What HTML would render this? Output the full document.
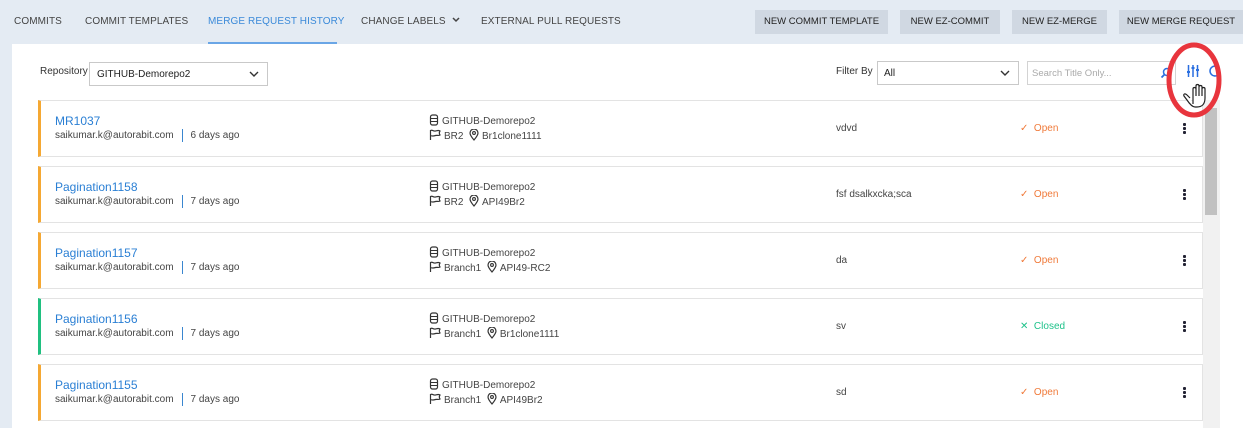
<!DOCTYPE html>
<html><head><style>
*{margin:0;padding:0;box-sizing:border-box}
body{width:1243px;height:428px;overflow:hidden;background:#e4ebf3;font-family:"Liberation Sans",sans-serif;position:relative;color:#333}
.a{position:absolute;white-space:nowrap}
.tab{font-size:10px;color:#444;top:16px;letter-spacing:0.1px}
.btn{position:absolute;top:10px;height:24px;background:#d0d8e2;font-size:9.5px;color:#222;text-align:center;line-height:24px}
.panel{position:absolute;left:12px;top:44px;width:1231px;height:384px;background:#fff}
.row{position:absolute;left:38px;width:1165px;height:57px;border:1px solid #e3e3e3;border-left:3px solid #f5a833;background:#fff}
.t{position:absolute;left:14px;top:13px;font-size:12px;color:#2a7fd4}
.s{position:absolute;left:14px;top:28px;font-size:10px;color:#444}
.s i{display:inline-block;width:1px;height:13px;background:#3a86cf;vertical-align:middle;margin:0 8px}
.r{position:absolute;left:388px;font-size:10px;color:#444}
.r svg{vertical-align:-2px;margin-right:3px}
.d{position:absolute;left:795px;top:22px;font-size:10px;color:#444}
.st{position:absolute;left:979px;top:22px;font-size:10px}
.k{position:absolute;left:1142px;top:22px;width:3px}
.k b{display:block;width:2.5px;height:2.5px;background:#223;border-radius:1px;margin-bottom:1.5px}
</style></head><body>
<svg width="0" height="0" style="position:absolute">
<symbol id="db" viewBox="0 0 10 12"><rect x="1.5" y="1" width="7" height="10" rx="2" fill="none" stroke="#333" stroke-width="1.2"/><path d="M1.5 4.5h7M1.5 7.5h7" stroke="#333" stroke-width="1.1"/></symbol>
<symbol id="fl" viewBox="0 0 12 12"><path d="M1.5 11V1.5c2-1 3 1 5 0.5s3-1 4.5 0c-1 1.5-1 2.5 0 4-1.5 1-3 0-4.5 0.5s-3 1-5 0" fill="none" stroke="#333" stroke-width="1.2"/></symbol>
<symbol id="pn" viewBox="0 0 10 12"><path d="M5 11C2 7.5 1 5.5 1 4a4 4 0 0 1 8 0c0 1.5-1 3.5-4 7z" fill="none" stroke="#333" stroke-width="1.2"/><circle cx="5" cy="4" r="1.4" fill="none" stroke="#333" stroke-width="1.1"/></symbol>
</svg>
<div class="a tab" style="left:14px">COMMITS</div>
<div class="a tab" style="left:85px">COMMIT TEMPLATES</div>
<div class="a tab" style="left:208px;color:#3b8ad9">MERGE REQUEST HISTORY</div>
<div class="a" style="left:208px;top:42px;width:129px;height:2px;background:#6aa6e6"></div>
<div class="a tab" style="left:361px">CHANGE LABELS <svg width="10" height="8" viewBox="0 0 10 8" style="margin-left:2px"><path d="M2 2l3 3 3-3" fill="none" stroke="#444" stroke-width="1.5"/></svg></div>
<div class="a tab" style="left:481px">EXTERNAL PULL REQUESTS</div>
<div class="btn" style="left:755px;width:133px">NEW COMMIT TEMPLATE</div>
<div class="btn" style="left:900px;width:100px">NEW EZ-COMMIT</div>
<div class="btn" style="left:1012px;width:95px">NEW EZ-MERGE</div>
<div class="btn" style="left:1119px;width:124px">NEW MERGE REQUEST</div>
<div class="panel"></div>
<div class="a" style="left:40px;top:66px;font-size:10px;color:#333">Repository</div>
<div class="a" style="left:89px;top:62px;width:179px;height:24px;border:1px solid #c9c9c9;font-size:10px;padding:6px 7px;color:#222">GITHUB-Demorepo2<svg style="position:absolute;right:8px;top:8px" width="10" height="7" viewBox="0 0 10 7"><path d="M1 1l4 4 4-4" fill="none" stroke="#333" stroke-width="1.4"/></svg></div>
<div class="a" style="left:836px;top:66px;font-size:10px;color:#333">Filter By</div>
<div class="a" style="left:877px;top:61px;width:142px;height:24px;border:1px solid #c9c9c9;font-size:10px;padding:6px 6px;color:#222">All<svg style="position:absolute;right:8px;top:8px" width="10" height="7" viewBox="0 0 10 7"><path d="M1 1l4 4 4-4" fill="none" stroke="#333" stroke-width="1.4"/></svg></div>
<div class="a" style="left:1027px;top:61px;width:149px;height:24px;border:1px solid #d3d3d3;font-size:9.5px;padding:6px 4px;color:#aaa">Search Title Only...<svg style="position:absolute;right:3px;top:5px" width="12" height="12" viewBox="0 0 12 12"><circle cx="7" cy="5" r="3.5" fill="none" stroke="#2a6fe0" stroke-width="1.5"/><path d="M4.5 7.5L1.5 10.5" stroke="#2a6fe0" stroke-width="1.8"/></svg></div>
<svg class="a" style="left:1186px;top:64px" width="14" height="14" viewBox="0 0 14 14" stroke="#2a6fe0" stroke-width="1.5"><path d="M2.5 1v12M7 1v12M11.5 1v12"/><path d="M1 8h3M5.5 4h3M10 6h3" stroke-width="2"/></svg>
<svg class="a" style="left:1206px;top:64px" width="14" height="14" viewBox="0 0 14 14"><path d="M12 3A5 5 0 1 0 12 11" fill="none" stroke="#2a6fe0" stroke-width="1.6"/></svg>
<div class="a" style="left:1203px;top:100px;width:17px;height:328px;background:#f1f1f1"></div>
<div class="a" style="left:1205px;top:108px;width:12px;height:107px;background:#c1c1c1"></div>
<svg class="a" style="left:1160px;top:40px;z-index:5" width="70" height="80" viewBox="0 0 70 80"><ellipse cx="34" cy="40" rx="25" ry="35" fill="none" stroke="#e8353d" stroke-width="5"/><path d="M33 64v-15c0-2 3-2 3 0v7-10c0-2 3-2 3 0v10-9c0-2 3-2 3 0v9-7c0-2 3-2 3 0v9c0 6-3 9-8 9h-2c-3 0-6-4-8-7l-3-4c-1-2 1-3 3-1l3 3" fill="#fff" stroke="#222" stroke-width="1.2"/></svg>

<div class="row" style="top:100px"><div class="t">MR1037</div><div class="s">saikumar.k@autorabit.com<i></i>6 days ago</div>
<div class="r" style="top:13px"><svg width="10" height="12"><use href="#db"/></svg>GITHUB-Demorepo2</div><div class="r" style="top:28px"><svg width="12" height="12"><use href="#fl"/></svg>BR2 &nbsp;<svg width="10" height="12"><use href="#pn"/></svg>Br1clone1111</div>
<div class="d">vdvd</div><div class="st" style="color:#f07a3a">✓ &nbsp;Open</div><div class="k"><b></b><b></b><b></b></div></div>

<div class="row" style="top:166px"><div class="t">Pagination1158</div><div class="s">saikumar.k@autorabit.com<i></i>7 days ago</div>
<div class="r" style="top:13px"><svg width="10" height="12"><use href="#db"/></svg>GITHUB-Demorepo2</div><div class="r" style="top:28px"><svg width="12" height="12"><use href="#fl"/></svg>BR2 &nbsp;<svg width="10" height="12"><use href="#pn"/></svg>API49Br2</div>
<div class="d">fsf dsalkxcka;sca</div><div class="st" style="color:#f07a3a">✓ &nbsp;Open</div><div class="k"><b></b><b></b><b></b></div></div>

<div class="row" style="top:232px"><div class="t">Pagination1157</div><div class="s">saikumar.k@autorabit.com<i></i>7 days ago</div>
<div class="r" style="top:13px"><svg width="10" height="12"><use href="#db"/></svg>GITHUB-Demorepo2</div><div class="r" style="top:28px"><svg width="12" height="12"><use href="#fl"/></svg>Branch1 &nbsp;<svg width="10" height="12"><use href="#pn"/></svg>API49-RC2</div>
<div class="d">da</div><div class="st" style="color:#f07a3a">✓ &nbsp;Open</div><div class="k"><b></b><b></b><b></b></div></div>

<div class="row" style="top:298px;border-left-color:#20c080"><div class="t">Pagination1156</div><div class="s">saikumar.k@autorabit.com<i></i>7 days ago</div>
<div class="r" style="top:13px"><svg width="10" height="12"><use href="#db"/></svg>GITHUB-Demorepo2</div><div class="r" style="top:28px"><svg width="12" height="12"><use href="#fl"/></svg>Branch1 &nbsp;<svg width="10" height="12"><use href="#pn"/></svg>Br1clone1111</div>
<div class="d">sv</div><div class="st" style="color:#1ec28a">✕ &nbsp;Closed</div><div class="k"><b></b><b></b><b></b></div></div>

<div class="row" style="top:364px"><div class="t">Pagination1155</div><div class="s">saikumar.k@autorabit.com<i></i>7 days ago</div>
<div class="r" style="top:13px"><svg width="10" height="12"><use href="#db"/></svg>GITHUB-Demorepo2</div><div class="r" style="top:28px"><svg width="12" height="12"><use href="#fl"/></svg>Branch1 &nbsp;<svg width="10" height="12"><use href="#pn"/></svg>API49Br2</div>
<div class="d">sd</div><div class="st" style="color:#f07a3a">✓ &nbsp;Open</div><div class="k"><b></b><b></b><b></b></div></div>
</body></html>
